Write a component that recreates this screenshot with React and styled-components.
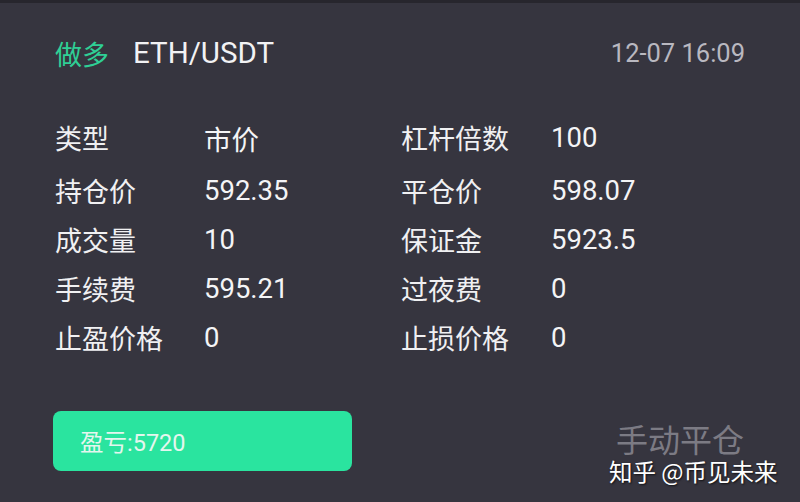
import React from "react";
import styled, { createGlobalStyle } from "styled-components";

const Global = createGlobalStyle`
  html, body { margin: 0; padding: 0; background: #36353f; }
  body { font-family: Roboto, "Noto Sans CJK SC", sans-serif; }
`;

const Page = styled.div`
  position: relative;
  width: 800px;
  height: 502px;
  box-sizing: border-box;
  background: #36353f;
  border-top: 3px solid #27262d;
  overflow: hidden;
`;

const Header = styled.div`
  display: flex;
  align-items: center;
  height: 50px;
  padding: 25px 55px 0 55px;
`;

const Side = styled.span`
  color: #2fcf95;
  font-size: 27px;
  font-family: "Noto Sans CJK SC", sans-serif;
`;

const Pair = styled.span`
  color: #f2f2f4;
  font-size: 29.5px;
  margin-left: 24px;
`;

const Time = styled.span`
  margin-left: auto;
  color: #b9b8c0;
  font-size: 25.5px;
`;

const Grid = styled.div`
  display: grid;
  grid-template-columns: 149px 197px 150px 1fr;
  grid-template-rows: 57px repeat(4, 49px);
  align-items: center;
  padding: 31px 0 0 55px;
`;

const Label = styled.span`
  color: #f0f0f2;
  font-size: 27px;
  font-family: "Noto Sans CJK SC", sans-serif;
`;

const Value = styled.span`
  color: #f4f4f6;
  font-size: 27.5px;
`;

const Footer = styled.div`
  display: flex;
  align-items: center;
  height: 60px;
  padding: 49px 55px 0 53px;
`;

const PnlButton = styled.div`
  display: flex;
  align-items: center;
  width: 299px;
  height: 60px;
  box-sizing: border-box;
  padding-left: 27px;
  background: #2ae49f;
  border-radius: 8px;
  color: #e4f6ee;
  font-size: 23.5px;
`;

const Close = styled.span`
  margin-left: auto;
  color: #7c7b84;
  font-size: 32px;
  line-height: 1;
  font-family: "Noto Sans CJK SC", sans-serif;
  margin-top: -6px;
  margin-right: 1px;
`;

const Watermark = styled.div`
  position: absolute;
  left: 609px;
  top: 457px;
  color: #ffffff;
  font-size: 23.5px;
  line-height: 1;
  font-family: "Noto Sans CJK SC", sans-serif;
  text-shadow: 1px 1px 2px rgba(0, 0, 0, 0.7);
  white-space: nowrap;
`;

const rows = [
  ["类型", "市价", "杠杆倍数", "100"],
  ["持仓价", "592.35", "平仓价", "598.07"],
  ["成交量", "10", "保证金", "5923.5"],
  ["手续费", "595.21", "过夜费", "0"],
  ["止盈价格", "0", "止损价格", "0"],
];

export default function App() {
  return (
    <>
      <Global />
      <Page>
        <Header>
          <Side>做多</Side>
          <Pair>ETH/USDT</Pair>
          <Time>12-07 16:09</Time>
        </Header>
        <Grid>
          {rows.map((r, i) => (
            <React.Fragment key={i}>
              <Label>{r[0]}</Label>
              <Value>{r[1]}</Value>
              <Label>{r[2]}</Label>
              <Value>{r[3]}</Value>
            </React.Fragment>
          ))}
        </Grid>
        <Footer>
          <PnlButton>盈亏:5720</PnlButton>
          <Close>手动平仓</Close>
        </Footer>
        <Watermark>知乎 @币见未来</Watermark>
      </Page>
    </>
  );
}
